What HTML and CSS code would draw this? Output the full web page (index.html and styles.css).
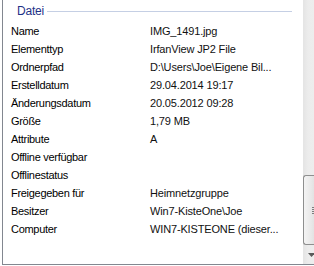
FILE: index.html
```html
<!DOCTYPE html>
<html>
<head>
<meta charset="utf-8">
<link rel="stylesheet" href="styles.css">
</head>
<body>
<div class="frame">
  <div class="list">
    <div class="group">
      <span class="group-title">Datei</span>
      <span class="group-line"></span>
    </div>
    <div class="row"><span class="label">Name</span><span class="value">IMG_1491.jpg</span></div>
    <div class="row"><span class="label">Elementtyp</span><span class="value">IrfanView JP2 File</span></div>
    <div class="row"><span class="label">Ordnerpfad</span><span class="value">D:\Users\Joe\Eigene Bil...</span></div>
    <div class="row"><span class="label">Erstelldatum</span><span class="value">29.04.2014 19:17</span></div>
    <div class="row"><span class="label">Änderungsdatum</span><span class="value">20.05.2012 09:28</span></div>
    <div class="row"><span class="label">Größe</span><span class="value">1,79 MB</span></div>
    <div class="row"><span class="label">Attribute</span><span class="value">A</span></div>
    <div class="row"><span class="label">Offline verfügbar</span><span class="value"></span></div>
    <div class="row"><span class="label">Offlinestatus</span><span class="value"></span></div>
    <div class="row"><span class="label">Freigegeben für</span><span class="value">Heimnetzgruppe</span></div>
    <div class="row"><span class="label">Besitzer</span><span class="value">Win7-KisteOne\Joe</span></div>
    <div class="row"><span class="label">Computer</span><span class="value">WIN7-KISTEONE (dieser...</span></div>
  </div>
  <div class="scrollbar">
    <div class="track"></div>
    <div class="thumb">
      <div class="grip"><span></span><span></span><span></span><span></span></div>
    </div>
    <div class="arrow-btn">
      <svg width="7" height="4" viewBox="0 0 7 4"><path d="M0 0H7L3.5 4Z" fill="#5a5a5a"/></svg>
    </div>
  </div>
</div>
</body>
</html>
```
FILE: styles.css
```css
html, body {
  margin: 0;
  padding: 0;
  background: #fff;
  overflow: hidden;
  width: 314px;
  height: 266px;
}
.frame {
  margin-left: 2px;
  width: 322px;
  height: 265px;
  border-left: 1px solid #828790;
  border-bottom: 1px solid #828790;
  display: flex;
  box-sizing: border-box;
  font-family: "Liberation Sans", Arial, sans-serif;
  font-size: 11px;
  color: #000;
}
.list {
  width: 300px;
  flex: none;
  padding-top: 3px;
}
.group {
  display: flex;
  align-items: center;
  height: 16px;
  padding-left: 14px;
  margin-bottom: 3px;
}
.group-title {
  color: #1e3287;
  font-size: 12px;
  letter-spacing: -0.2px;
}
.group-line {
  flex: none;
  width: 245px;
  height: 1px;
  margin-left: 3px;
  background: #c5cfe4;
}
.row {
  display: flex;
  height: 18px;
  align-items: center;
}
.label {
  width: 139px;
  padding-left: 8px;
  flex: none;
  letter-spacing: -0.3px;
}
.value {
  letter-spacing: -0.15px;
  color: #111;
}
.scrollbar {
  width: 17px;
  flex: none;
  display: flex;
  flex-direction: column;
  background: linear-gradient(to right, #e4e4e4, #ececec 30%, #eeeeee);
}
.track {
  height: 175px;
  flex: none;
}
.thumb {
  height: 70px;
  flex: none;
  border: 1px solid #8e8f8f;
  border-right: none;
  border-radius: 3px 0 0 3px;
  background: linear-gradient(to right, #f4f4f4, #e8e8e8 45%, #d6d6d6);
  box-sizing: border-box;
  display: flex;
  align-items: center;
  justify-content: flex-end;
  padding-right: 2px;
}
.grip {
  display: flex;
  flex-direction: column;
  gap: 1px;
  width: 6px;
}
.grip span {
  height: 1px;
  background: #7d7d7d;
}
.arrow-btn {
  flex: 1;
  display: flex;
  align-items: center;
  justify-content: flex-start;
  padding-left: 5px;
}
```
